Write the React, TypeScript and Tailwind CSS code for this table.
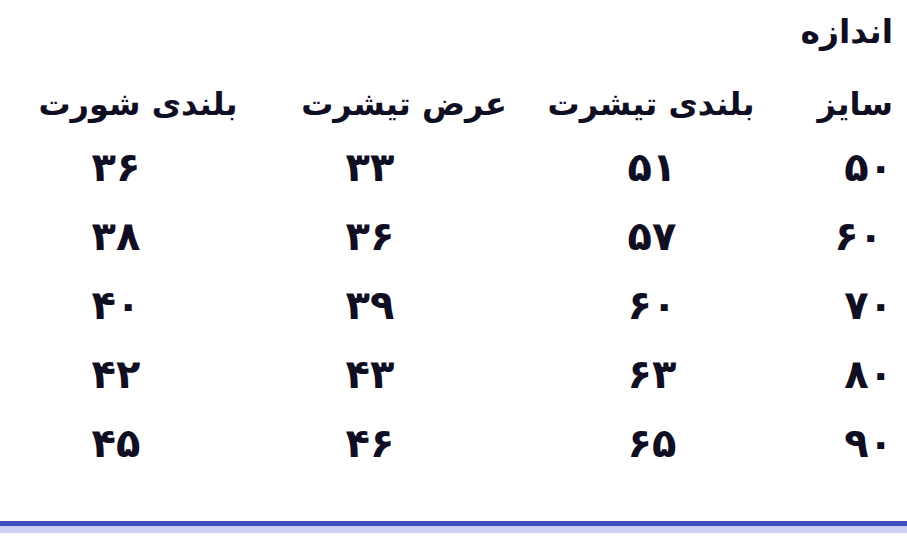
const headers = ["سایز", "بلندی تیشرت", "عرض تیشرت", "بلندی شورت"];

const rows = [
  ["۵۰", "۵۱", "۳۳", "۳۶"],
  ["۶۰", "۵۷", "۳۶", "۳۸"],
  ["۷۰", "۶۰", "۳۹", "۴۰"],
  ["۸۰", "۶۳", "۴۳", "۴۲"],
  ["۹۰", "۶۵", "۴۶", "۴۵"],
];

export default function App() {
  return (
    <div
      dir="rtl"
      className="w-[907px] h-[537px] bg-white flex flex-col text-[#100e22] overflow-hidden"
      style={{ fontFamily: '"DejaVu Sans", "Noto Sans", sans-serif' }}
    >
      <div className="flex-1 pr-[14px]">
        <h2 className="text-[33px] font-bold leading-[40px] pt-[12px]">اندازه</h2>

        <div className="grid grid-cols-[123px_238px_256px_276px] mt-[28px] h-[40px] items-center text-[32px] font-bold">
          {headers.map((h, i) => (
            <div key={h} className={i === 0 ? "text-right" : "text-center"}>
              {h}
            </div>
          ))}
        </div>

        <div className="grid grid-cols-[123px_236px_328px_180px] mt-[12px] text-[40px] font-bold">
          {rows.map((r, ri) =>
            r.map((c, ci) => (
              <div
                key={ri + "-" + ci}
                className={
                  "h-[69px] flex items-center " +
                  (ci === 0 ? "justify-start" : "justify-center") +
                  (ci === 0 && ri === 1 ? " pr-[10px]" : "")
                }
              >
                {c}
              </div>
            ))
          )}
        </div>
      </div>

      <div className="h-[5px] bg-[#4150c1]" />
      <div className="h-[7px] bg-[#ccd0f3]" />
      <div className="h-[4px] bg-white" />
    </div>
  );
}
